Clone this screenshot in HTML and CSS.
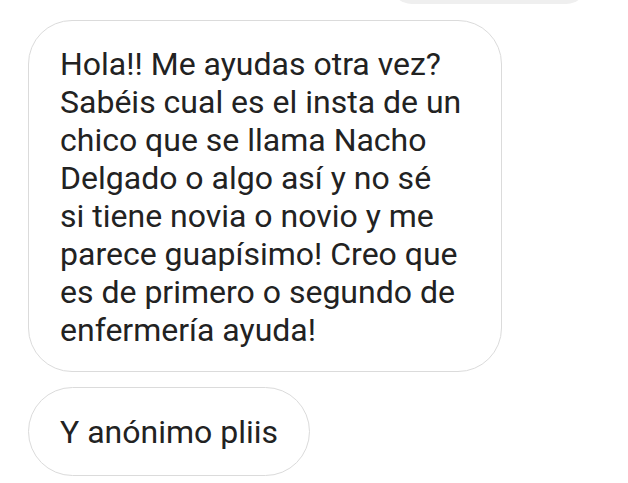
FILE: index.html
```html
<!DOCTYPE html>
<html lang="es">
<head>
<meta charset="utf-8">
<link rel="stylesheet" href="styles.css">
</head>
<body>
<div class="thread">
  <div class="bubble sent"></div>
  <div class="bubble received main">Hola!! Me ayudas otra vez?<br>Sabéis cual es el insta de un<br>chico que se llama Nacho<br>Delgado o algo así y no sé<br>si tiene novia o novio y me<br>parece guapísimo! Creo que<br>es de primero o segundo de<br>enfermería ayuda!</div>
  <div class="bubble received short">Y anónimo pliis</div>
</div>
</body>
</html>
```
FILE: styles.css
```css
html, body {
  margin: 0;
  background: #ffffff;
}
body {
  width: 628px;
  height: 483px;
  overflow: hidden;
}
.thread {
  display: flex;
  flex-direction: column;
  align-items: flex-start;
  padding-left: 28px;
  font-family: Roboto, "Noto Sans", sans-serif;
  font-size: 32px;
  line-height: 38px;
  color: #222222;
}
.bubble {
  box-sizing: border-box;
}
.sent {
  margin-left: 362px;
  width: 198px;
  height: 60px;
  margin-top: -56px;
  background: #efefef;
  border-radius: 22px;
}
.received {
  border: 1.5px solid #dbdbdb;
  background: #ffffff;
  white-space: nowrap;
}
.main {
  margin-top: 16px;
  width: 474px;
  height: 352px;
  padding: 24px 20px 0 31px;
  border-radius: 44px;
}
.short {
  margin-top: 15px;
  width: 282px;
  height: 89px;
  padding: 25px 10px 0 31px;
  border-radius: 44.5px;
}
```
